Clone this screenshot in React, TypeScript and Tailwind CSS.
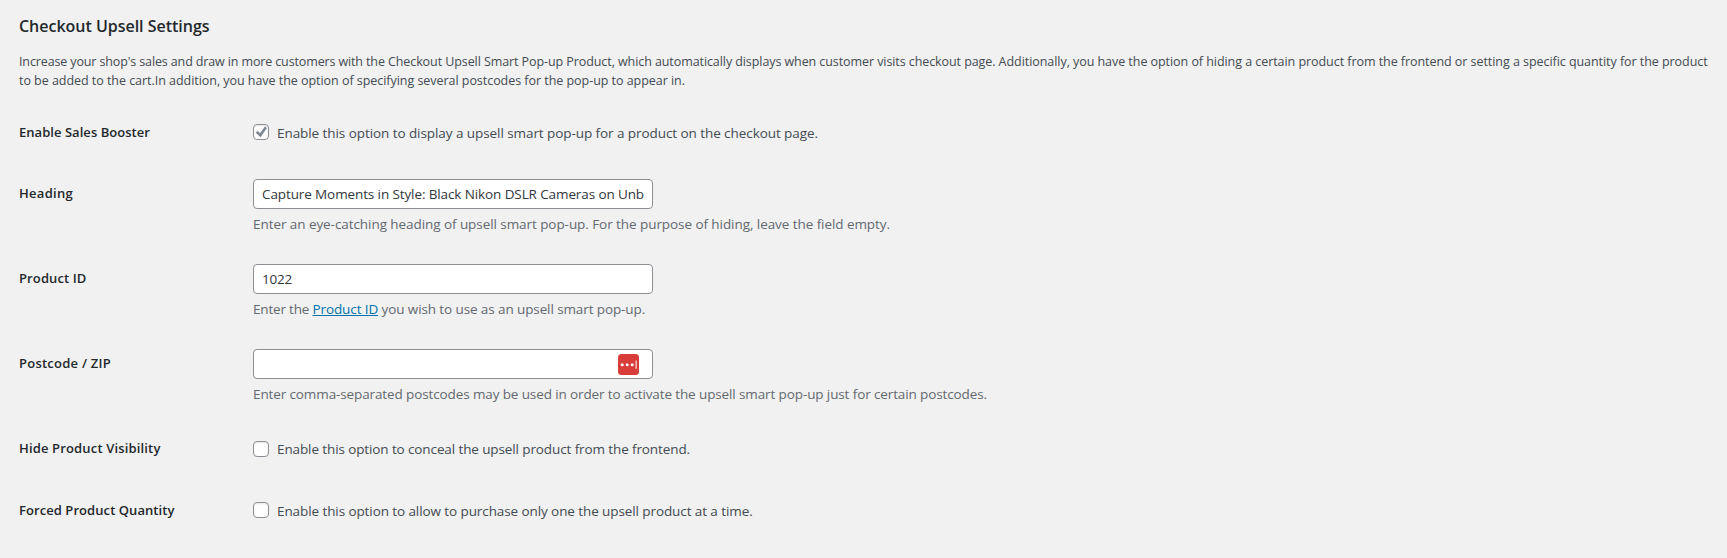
import type { ReactNode } from "react";

function Row({ label, labelClass, height, children }: { label: string; labelClass: string; height: string; children: ReactNode }) {
  return (
    <div className={`flex ${height}`}>
      <div className="w-[234px] shrink-0 pt-5 text-[13px] leading-[18.2px] font-semibold text-[#23282d]">
        <span className={labelClass}>{label}</span>
      </div>
      <div className="min-w-0 flex-1 whitespace-nowrap">{children}</div>
    </div>
  );
}

function Check({ checked = false, textClass, children }: { checked?: boolean; textClass: string; children: string }) {
  return (
    <label className="flex items-start pt-[21.5px]">
      <span className="flex size-4 shrink-0 items-center justify-center rounded-[4px] border border-[#8c8f94] bg-white shadow-[inset_0_1px_2px_rgba(0,0,0,0.1)]">
        {checked && (
          <svg viewBox="0 0 14 14" className="size-3.5">
            <path d="M1.5 7.6 4 6 6 8.3 10.9 1.6 13 2.9 6.5 12.2Z" fill="#7e8993" />
          </svg>
        )}
      </span>
      <span className={`ml-2 text-[#444b52] ${textClass}`}>{children}</span>
    </label>
  );
}

function Field({ value, children, valueClass = "" }: { value?: string; children?: ReactNode; valueClass?: string }) {
  return (
    <div className="mt-[15px] flex h-[30px] w-[400px] items-center overflow-hidden rounded-[4px] border border-[#8c8f94] bg-white px-2 leading-[28px] text-[#32373c]">
      <span className={valueClass}>{value}</span>
      {children}
    </div>
  );
}

function Hint({ className, children }: { className: string; children: ReactNode }) {
  return <p className={`mt-[6px] leading-[18px] text-[#646970] ${className}`}>{children}</p>;
}

export default function App() {
  return (
    <div className="h-[558px] overflow-hidden bg-[#f1f1f1] pl-[19px] font-['Open_Sans','Noto_Sans',sans-serif] text-[13.5px]">
      <div className="h-[102.5px] pt-[15px]">
        <h2 className="text-[16px] leading-[22px] font-semibold tracking-[-0.018px] text-[#23282d]">Checkout Upsell Settings</h2>
        <p className="mt-[15px] text-[12.5px] leading-[19px] whitespace-nowrap text-[#444b52]">
          <span className="tracking-[-0.129px]">Increase your shop's sales and draw in more customers with the </span>
          <span className="tracking-[-0.081px]">
            Checkout Upsell Smart Pop-up Product, which automatically displays when customer visits checkout page.{" "}
          </span>
          <span className="tracking-[-0.053px]">
            Additionally, you have the option of hiding a certain product from the frontend or setting a specific quantity for the product
          </span>
          <br />
          <span className="tracking-[-0.04px]">
            to be added to the cart.In addition, you have the option of specifying several postcodes for the pop-up to appear in.
          </span>
        </p>
      </div>

      <Row label="Enable Sales Booster" labelClass="tracking-[0.041px]" height="h-[61.5px]">
        <Check checked textClass="leading-[18px] tracking-[-0.069px]">Enable this option to display a upsell smart pop-up for a product on the checkout page.</Check>
      </Row>

      <Row label="Heading" labelClass="tracking-[0.288px]" height="h-[85px]">
        <Field value="Capture Moments in Style: Black Nikon DSLR Cameras on Unb" valueClass="tracking-[-0.109px]" />
        <Hint className="tracking-[-0.067px]">
          Enter an eye-catching heading of upsell smart pop-up. For the purpose of hiding, leave the field empty.
        </Hint>
      </Row>

      <Row label="Product ID" labelClass="tracking-[0.114px]" height="h-[85px]">
        <Field value="1022" valueClass="tracking-[-0.2px]" />
        <Hint className="tracking-[-0.103px]">
          <span className="tracking-[-0.19px]">Enter the </span>
          <a className="text-[#0073aa] underline" href="#">Product ID</a> you wish to use as an upsell smart pop-up.
        </Hint>
      </Row>

      <Row label="Postcode / ZIP" labelClass="tracking-[0.24px]" height="h-[85px]">
        <Field>
          <svg viewBox="0 0 21 21" className="mr-[5px] ml-auto size-[21px]">
            <rect width="21" height="21" rx="3.5" fill="#d93d3a" />
            <circle cx="4.2" cy="10.7" r="1.5" fill="#fff" />
            <circle cx="9.2" cy="10.7" r="1.5" fill="#fff" />
            <circle cx="14.2" cy="10.7" r="1.5" fill="#fff" />
            <rect x="17.6" y="6.5" width="1" height="8.3" fill="#fff" />
          </svg>
        </Field>
        <Hint className="tracking-[-0.115px]">
          Enter comma-separated postcodes may be used in order to activate the upsell smart pop-up just for certain postcodes.
        </Hint>
      </Row>

      <Row label="Hide Product Visibility" labelClass="tracking-[0.154px]" height="h-[61.5px]">
        <Check textClass="leading-[17px] tracking-[-0.11px]">Enable this option to conceal the upsell product from the frontend.</Check>
      </Row>

      <Row label="Forced Product Quantity" labelClass="tracking-[0.069px]" height="h-[61.5px]">
        <Check textClass="leading-[18px] tracking-[-0.09px]">Enable this option to allow to purchase only one the upsell product at a time.</Check>
      </Row>
    </div>
  );
}
